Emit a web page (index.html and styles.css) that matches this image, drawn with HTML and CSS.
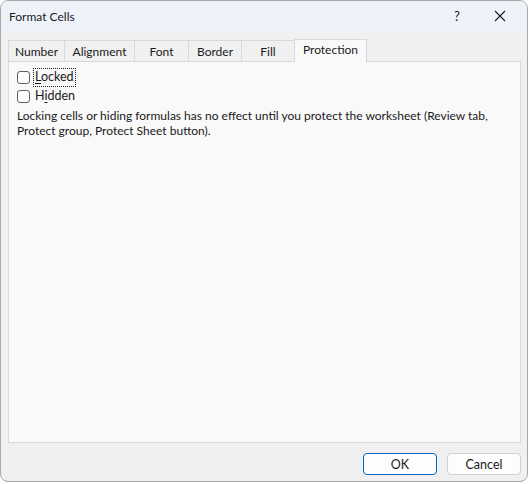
FILE: index.html
```html
<!DOCTYPE html>
<html>
<head>
<meta charset="utf-8">
<link rel="stylesheet" href="styles.css">
</head>
<body>
<div class="window">
  <div class="titlebar">
    <span class="title">Format Cells</span>
    <div class="controls">
      <span class="help">?</span>
      <span class="close">
        <svg width="12" height="12" viewBox="0 0 12 12"><path d="M1 1 L11 11 M11 1 L1 11" stroke="#1a1a1a" stroke-width="1.1" fill="none"/></svg>
      </span>
    </div>
  </div>
  <div class="content">
    <div class="tabs">
      <div class="tab t-number">Number</div>
      <div class="tab t-align">Alignment</div>
      <div class="tab t-font">Font</div>
      <div class="tab t-border">Border</div>
      <div class="tab t-fill">Fill</div>
      <div class="tab active t-prot">Protection</div>
    </div>
    <div class="panel">
      <label class="check">
        <span class="box"></span>
        <span class="lbl focus"><u>L</u>ocked</span>
      </label>
      <label class="check">
        <span class="box"></span>
        <span class="lbl">H<u>i</u>dden</span>
      </label>
      <p class="note">Locking cells or hiding formulas has no effect until you protect the worksheet (Review tab, Protect group, Protect Sheet button).</p>
    </div>
    <div class="buttons">
      <button class="btn default">OK</button>
      <button class="btn">Cancel</button>
    </div>
  </div>
</div>
</body>
</html>
```
FILE: styles.css
```css
html, body {
  margin: 0;
  padding: 0;
  background: #ffffff;
}
body {
  width: 530px;
  height: 484px;
  font-family: "Lato", "Noto Sans", sans-serif;
  font-size: 12px;
  color: #1a1a1a;
}
.window {
  width: 526px;
  height: 480px;
  border: 1px solid #a8a8a8;
  border-radius: 8px;
  background: #f0f0f0;
  overflow: hidden;
  display: flex;
  flex-direction: column;
}
.titlebar {
  height: 31px;
  background: #eef2f9;
  display: flex;
  align-items: center;
  justify-content: space-between;
  padding-left: 8px;
}
.title {
  font-size: 12px;
  margin-top: -1px;
}
.controls {
  display: flex;
  align-items: center;
  height: 100%;
}
.help {
  width: 40px;
  text-align: center;
  font-size: 13px;
  margin-top: -1px;
}
.close {
  width: 46px;
  margin-right: 4px;
  display: flex;
  justify-content: center;
  align-items: center;
  margin-top: -1px;
}
.content {
  flex: 1;
  display: flex;
  flex-direction: column;
  padding: 7px 6px 0 7px;
}
.tabs {
  display: flex;
  align-items: flex-end;
  height: 22px;
  position: relative;
  z-index: 1;
}
.tab {
  height: 21px;
  box-sizing: border-box;
  border: 1px solid #d9d9d9;
  border-bottom: none;
  border-right: none;
  background: #f0f0f0;
  display: flex;
  align-items: center;
  justify-content: center;
  font-size: 12px;
  padding-top: 0;
}
.t-number { width: 56px; }
.t-align { width: 70px; }
.t-font { width: 54px; }
.t-border { width: 53px; }
.t-fill { width: 53px; }
.tab.active {
  width: 73px;
  height: 23px;
  background: #f9f9f9;
  border-right: 1px solid #d9d9d9;
  margin-bottom: -1px;
  padding-top: 0;
  padding-bottom: 3px;
}
.panel {
  height: 382px;
  box-sizing: border-box;
  background: #f9f9f9;
  border: 1px solid #d9d9d9;
  padding: 6px 8px 0 8px;
}
.check {
  display: flex;
  align-items: center;
  height: 19px;
  margin-bottom: 0;
}
.box {
  width: 11px;
  height: 11px;
  border: 1px solid #616161;
  border-radius: 3px;
  background: #fdfdfd;
  margin-right: 3px;
}
.lbl {
  padding: 1px 1px 2px 1px;
  border: 1px dotted transparent;
  line-height: 14px;
  font-size: 12.5px;
}
.lbl.focus {
  border-color: #222;
}
.lbl u {
  text-decoration-thickness: 1px;
  text-underline-offset: 2px;
}
.note {
  margin: 2px 0 0 0;
  line-height: 15px;
  font-size: 12px;
}
.buttons {
  display: flex;
  justify-content: flex-end;
  gap: 10px;
  padding-top: 10px;
  padding-right: 0;
}
.btn {
  width: 74px;
  height: 22px;
  box-sizing: border-box;
  border: 1px solid #d0d0d0;
  border-radius: 4px;
  background: #fdfdfd;
  font-family: "Lato", "Noto Sans", sans-serif;
  font-size: 12.5px;
  color: #1a1a1a;
  padding: 0;
}
.btn.default {
  border: 1px solid #0067c0;
}
```
